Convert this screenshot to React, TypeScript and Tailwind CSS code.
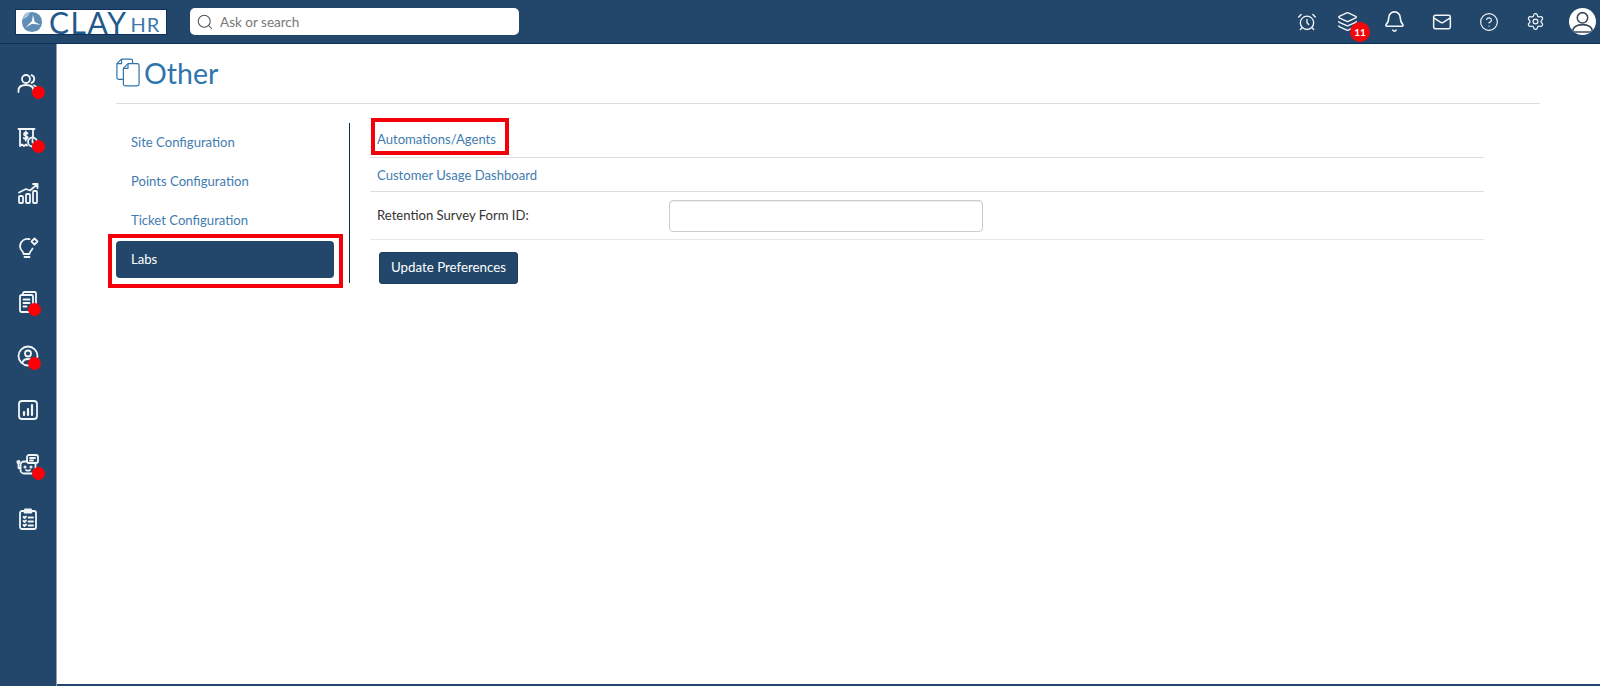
import { AlarmClock, Bell, CircleHelp, Layers, Mail, Search, Settings } from "lucide-react";
import type { ReactNode } from "react";

const Ico = ({ children }: { children: ReactNode }) => (
  <svg
    viewBox="0 0 24 24"
    className="h-[24px] w-[24px]"
    fill="none"
    stroke="currentColor"
    strokeWidth="1.8"
    strokeLinecap="round"
    strokeLinejoin="round"
  >
    {children}
  </svg>
);

// dot: null = no red marker, otherwise the classes that place it
const sideItems: { dot: string | null; icon: ReactNode }[] = [
  {
    dot: "left-[24px] top-[22px]",
    icon: (
      <Ico>
        <circle cx="10" cy="7" r="4" />
        <path d="M2.500 20v-1.500c0-3.500 3-5.500 7.500-5.500s7.500 2 7.500 5.500V20" />
        <path d="M15.500 3.200a4 4 0 0 1 0 7.600" />
        <path d="M18 13.500c2.500.8 4 2.500 4 5" />
      </Ico>
    ),
  },
  {
    dot: "left-[24px] top-[22px]",
    icon: (
      <Ico>
        <path d="M4 3h13v9M4 3v17l2-1.500 2 1.500 2-1.500 1 1" />
        <path d="M2.500 3h16" />
        <path d="M11.500 7.500c-.5-1-3.500-1.200-3.500.7 0 2 3.700 1.200 3.700 3.200 0 1.800-3.200 1.700-4 .5M9.800 5.500v9" />
        <circle cx="16.500" cy="16" r="4.500" />
        <path d="M16.500 14v2.200l1.500 1" />
      </Ico>
    ),
  },
  {
    dot: null,
    icon: (
      <Ico>
        <rect x="3" y="15" width="4" height="7" rx="1" />
        <rect x="10" y="13" width="4" height="9" rx="1" />
        <rect x="17" y="10" width="4" height="12" rx="1" />
        <path d="M3 11.500 10 8l4 1.500L21 3.500M17 3h4.500v4" />
      </Ico>
    ),
  },
  {
    dot: null,
    icon: (
      <Ico>
        <path d="M13.500 4.200A7.500 7.500 0 0 0 4 11.200c0 2.500 1.300 4 2.500 5.300.7.800 1 1.500 1 2.500h6c0-1 .3-1.700 1-2.500.8-.9 1.600-1.800 2-3" />
        <path d="M8.500 22h5" />
        <path d="M18.500 3.500 21.500 6.500 18.500 9.500 15.500 6.500Z" />
      </Ico>
    ),
  },
  {
    dot: "left-[20px] top-[21px]",
    icon: (
      <Ico>
        <path d="M7 5V3.500A1.500 1.500 0 0 1 8.500 2h10A1.500 1.500 0 0 1 20 3.500V17a1.500 1.500 0 0 1-1.500 1.500H17" />
        <rect x="4" y="5" width="13" height="17" rx="1.500" />
        <path d="M7.500 9.500h6M7.500 13h6M7.500 16.500h3" />
      </Ico>
    ),
  },
  {
    dot: "left-[20px] top-[21px]",
    icon: (
      <Ico>
        <circle cx="12" cy="12" r="9.500" />
        <circle cx="12" cy="9.500" r="3" />
        <path d="M6.500 18.500c.8-2.500 2.800-3.500 5.500-3.500s4.700 1 5.500 3.500" />
      </Ico>
    ),
  },
  {
    dot: null,
    icon: (
      <Ico>
        <rect x="3" y="3" width="18" height="18" rx="3" />
        <path d="M8 17v-3M12 17v-6M16 17V7" strokeWidth="2.200" />
      </Ico>
    ),
  },
  {
    dot: "left-[24px] top-[22px]",
    icon: (
      <Ico>
        <rect x="11" y="2" width="11" height="8" rx="2" />
        <path d="M14 5h5M14 7.500h3" />
        <path d="M11 8.500H8A3.500 3.500 0 0 0 4.500 12v5A3.500 3.500 0 0 0 8 20.500h8a3.500 3.500 0 0 0 3.500-3.500v-6" />
        <circle cx="2.500" cy="9" r="1.200" />
        <path d="M2.500 10.500V15H4.500" />
        <circle cx="9" cy="14" r=".6" />
        <circle cx="15" cy="14" r=".6" />
        <path d="M10 17c1 .7 3 .7 4 0" />
      </Ico>
    ),
  },
  {
    dot: null,
    icon: (
      <Ico>
        <rect x="4" y="4" width="16" height="18" rx="2" />
        <path d="M9 4V2.500h6V4M8.500 5.500h7" />
        <path d="M7.500 10l1 1 1.500-1.500M7.500 14l1 1 1.500-1.500M7.500 18l1 1 1.500-1.500" />
        <path d="M12.500 10.500h4.500M12.500 14.500h4.500M12.500 18.500h4.500" />
      </Ico>
    ),
  },
];

const menuItems = ["Site Configuration", "Points Configuration", "Ticket Configuration"];

export default function App() {
  return (
    <div className="flex h-[686px] w-[1600px] flex-col overflow-hidden bg-white font-['Lato',sans-serif] text-[13.100px]">
      {/* top bar */}
      <header className="relative flex h-[44px] shrink-0 items-center border-b border-[#0f2f5c] bg-[#23476a] pl-[15px]">
        <div className="flex h-[26px] w-[152px] items-center border border-[#0f2f5c] bg-white pl-[5px] text-[#1f5a8a]">
          <svg viewBox="0 0 24 24" className="h-[22px] w-[22px] shrink-0">
            <circle cx="12" cy="12" r="11" fill="#5f8db5" />
            <path d="M5 18 12 11l1-7 2 8 6 3-9-1z" fill="#ffffff" />
            <path d="M2 9c4-1 7-4 8-8-5 0-8 3-8 8z" fill="#a9c3da" />
          </svg>
          <span className="ml-[6px] h-[24px] text-[30px] leading-[24px] tracking-[1.500px]">CLAY</span>
          <span className="ml-[3px] h-[18px] mt-[5px] text-[20px] leading-[18px] tracking-[1px] text-[#3a78ab]">HR</span>
        </div>
        <div className="ml-[23px] flex h-[27px] w-[329px] items-center rounded-[5px] bg-white pl-[6px] text-[#77787a]">
          <Search size={18} strokeWidth={1.4} className="text-[#555]" />
          <span className="ml-[6px] pt-[1px] text-[13.500px]">Ask or search</span>
        </div>
        <div className="ml-auto flex h-full items-center text-[#f2f5f8]">
          <AlarmClock size={20} strokeWidth={1.6} className="mr-[20px]" />
          <div className="relative mr-[25px]">
            <Layers size={21} strokeWidth={1.6} />
            <span className="absolute left-[13px] top-[11px] flex h-[20px] w-[20px] items-center justify-center rounded-full bg-[#f3060c] text-[10px] font-bold text-white">
              11
            </span>
          </div>
          <Bell size={23} strokeWidth={1.7} className="mr-[26px]" />
          <Mail size={20} strokeWidth={1.8} className="mr-[27px]" />
          <CircleHelp size={20} strokeWidth={1.4} className="mr-[27px]" />
          <Settings size={19} strokeWidth={1.6} className="mr-[24px]" />
          <div className="mr-[4px] flex h-[27px] w-[27px] items-center justify-center overflow-hidden rounded-full bg-white text-[#3a4a5a]">
            <svg viewBox="0 0 24 24" className="h-[25px] w-[25px]" fill="none" stroke="currentColor" strokeWidth="1.5">
              <circle cx="12" cy="8.500" r="5" />
              <path d="M2.500 22c0-4.500 4-7 9.500-7s9.500 2.500 9.500 7z" />
            </svg>
          </div>
        </div>
      </header>

      <div className="flex min-h-0 flex-1">
        {/* left rail */}
        <aside className="flex w-[57px] shrink-0 flex-col items-center border-r border-[#8ea0b2] bg-[#23476a] pr-[1px] pt-[20px] text-[#f2f5f8]">
          {sideItems.map((item, i) => (
            <div key={i} className="relative mb-[14.400px] flex h-[40px] w-[40px] items-center justify-center">
              {item.icon}
              {item.dot && <span className={`absolute h-[13px] w-[13px] rounded-full bg-[#fb0007] ${item.dot}`} />}
            </div>
          ))}
        </aside>

        <main className="flex min-w-0 flex-1 flex-col border-b-2 border-[#23476a] pl-[59px]">
          <div className="mr-[60px] flex h-[60px] items-start border-b border-[#dddddd] pt-[13px] text-[#2f75ad]">
            <svg viewBox="0 0 26 32" className="h-[30px] w-[24px]" fill="none" stroke="currentColor" strokeWidth="1.300" strokeLinejoin="round">
              <path d="M8 24H3a2 2 0 0 1-2-2V7l5-5h10a2 2 0 0 1 2 2v3" />
              <path d="M1 7h5V2" />
              <path d="M13 7h10a2 2 0 0 1 2 2v20a2 2 0 0 1-2 2H10a2 2 0 0 1-2-2V12z" />
              <path d="M8 12h5V7" />
            </svg>
            <h1 className="ml-[4px] text-[28.500px] leading-[32px]">Other</h1>
          </div>

          <div className="flex pt-[19px]">
            {/* settings menu */}
            <div className="flex h-[160px] w-[234px] shrink-0 flex-col border-r border-[#0f2f5c] pr-[15px] pt-0">
              {menuItems.map((label) => (
                <div key={label} className="flex h-[39px] shrink-0 items-center pl-[15px] pt-[1px] text-[#3f7cb0]">
                  {label}
                </div>
              ))}
              <div className="relative mt-[1px] flex h-[37px] shrink-0 items-center rounded-[4px] bg-[#23476a] pl-[15px] pt-[1px] text-white">
                Labs
                <span className="absolute -bottom-[10px] -left-[8px] -right-[9px] -top-[7px] border-[4px] border-[#f3000b]" />
              </div>
            </div>

            {/* labs panel */}
            <div className="ml-[20px] mt-[-1px] w-[1114px] shrink-0">
              <div className="flex h-[36px] items-center border-b border-[#dddddd] pl-[7px] text-[#3f7cb0]">
                <span className="relative">
                  Automations/Agents
                  <span className="absolute -bottom-[6px] -left-[6px] -right-[13px] -top-[12px] border-[4px] border-[#f3000b]" />
                </span>
              </div>
              <div className="flex h-[34px] items-center border-b border-[#dddddd] pl-[7px] pt-[2px] text-[#3f7cb0]">
                Customer Usage Dashboard
              </div>
              <div className="flex h-[48px] items-center border-b border-[#e6e6e6] pl-[7px] text-[#333333]">
                <span className="w-[292px] pt-[1px]">Retention Survey Form ID:</span>
                <div className="mt-[1px] h-[32px] w-[314px] rounded-[4px] border border-[#cccccc] shadow-[inset_0_1px_1px_rgba(0,0,0,0.075)]" />
              </div>
              <div className="pl-[9px] pt-[12px]">
                <button className="flex h-[32px] w-[139px] items-center justify-center rounded-[3px] border border-[#1d3c5c] bg-[#23476a] text-[13.300px] text-white">
                  Update Preferences
                </button>
              </div>
            </div>
          </div>
        </main>
      </div>
    </div>
  );
}
